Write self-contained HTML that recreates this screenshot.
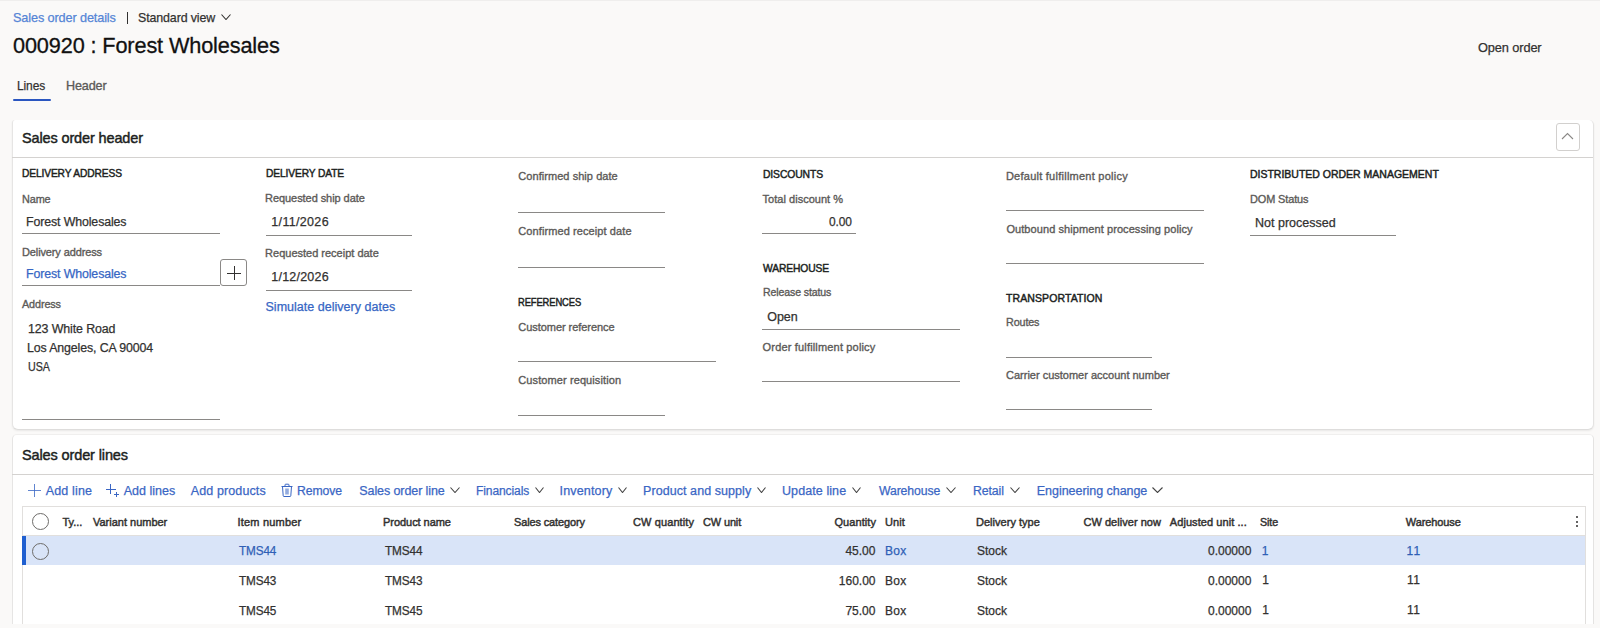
<!DOCTYPE html>
<html><head><meta charset="utf-8"><style>
html,body{margin:0;padding:0;}
body{width:1600px;height:628px;overflow:hidden;background:#faf9f8;position:relative;font-family:"Liberation Sans",sans-serif;}
.t{position:absolute;white-space:pre;}
.r{position:absolute;}
.card{position:absolute;background:#fff;border-left:1px solid #e6e5e4;border-right:1.5px solid #e4e3e2;box-sizing:border-box;}
</style></head><body>
<div class="r" style="left:0;top:0;width:1600px;height:1px;background:#efeeed"></div>
<div class="r" style="left:127px;top:12px;width:1px;height:12px;background:#323130"></div>
<div class="r" style="left:13px;top:99px;width:38px;height:2px;background:#2a56c0;border-radius:1px"></div>
<div class="card" style="left:12px;top:120px;width:1582px;height:310px;border-bottom:1.5px solid #dedddc;border-radius:3px 5px 6px 6px;box-shadow:0 1px 2px rgba(0,0,0,0.07)"></div>
<div class="r" style="left:12px;top:157px;width:1581px;height:1px;background:#d4d2d0"></div>
<div class="r" style="left:1556px;top:123px;width:22px;height:26px;border:1px solid #d2d0ce;border-radius:3px;background:#fff"></div>
<svg class="r" style="left:1561px;top:132px" width="13" height="8" viewBox="0 0 13 8"><polyline points="1,7 6.5,1.5 12,7" fill="none" stroke="#8a8886" stroke-width="1.1"/></svg>
<div class="r" style="left:220px;top:259px;width:25px;height:25px;border:1px solid #8a8886;border-radius:3px;background:#fff"></div>
<div class="r" style="left:227px;top:273px;width:14px;height:1px;background:#323130"></div>
<div class="r" style="left:233.5px;top:266px;width:1px;height:14px;background:#323130"></div>
<div class="card" style="left:12px;top:434px;width:1582px;height:200px;border-top:1px solid #f0efee;border-radius:5px 5px 0 0"></div>
<div class="r" style="left:12px;top:474px;width:1581px;height:1px;background:#d4d2d0"></div>
<div class="r" style="left:22px;top:506px;width:1562px;height:130px;border:1px solid #e1dfdd;background:#fff"></div>
<div class="r" style="left:23px;top:535px;width:1562px;height:1px;background:#e1dfdd"></div>
<div class="r" style="left:23px;top:536px;width:1562px;height:29px;background:#d9e4f8"></div>
<div class="r" style="left:22px;top:536px;width:4px;height:29px;background:#1f5fd0"></div>
<div class="r" style="left:32px;top:513px;width:15px;height:15px;border:1.3px solid #6e6c6a;border-radius:50%"></div>
<div class="r" style="left:32px;top:543px;width:15px;height:15px;border:1.3px solid #6e6c6a;border-radius:50%"></div>
<div class="r" style="left:1575.5px;top:515.5px;width:2px;height:2px;background:#323130;border-radius:50%"></div>
<div class="r" style="left:1575.5px;top:520.5px;width:2px;height:2px;background:#323130;border-radius:50%"></div>
<div class="r" style="left:1575.5px;top:525.2px;width:2px;height:2px;background:#323130;border-radius:50%"></div>
<div class="r" style="left:0;top:624px;width:1600px;height:4px;background:#faf9f8"></div>
<!-- toolbar icons -->
<div class="r" style="left:28px;top:490px;width:13px;height:1px;background:#3a66c4;opacity:.8"></div>
<div class="r" style="left:34px;top:484px;width:1px;height:13px;background:#3a66c4;opacity:.8"></div>
<div class="r" style="left:106px;top:489px;width:10px;height:1px;background:#3a66c4"></div>
<div class="r" style="left:110px;top:484px;width:1px;height:10px;background:#3a66c4"></div>
<div class="r" style="left:114px;top:494px;width:5px;height:1px;background:#3a66c4"></div>
<div class="r" style="left:116px;top:492px;width:1px;height:5px;background:#3a66c4"></div>
<svg class="r" style="left:281px;top:483px" width="12" height="15" viewBox="0 0 12 15"><path d="M0.5,3.5 H11.5 M4,3.5 V2 Q4,1.2 4.8,1.2 H7.2 Q8,1.2 8,2 V3.5 M1.5,3.5 L2.2,12.8 Q2.3,13.5 3,13.5 H9 Q9.7,13.5 9.8,12.8 L10.5,3.5" fill="none" stroke="#3a66c4" stroke-width="1"/><rect x="4.2" y="5.5" width="3.6" height="6" fill="#3a66c4" opacity="0.55"/></svg>
<div class="r" style="left:22px;top:233px;width:198px;height:1px;background:#8a8886"></div><div class="r" style="left:22px;top:285px;width:198px;height:1px;background:#8a8886"></div><div class="r" style="left:22px;top:419px;width:198px;height:1px;background:#8a8886"></div><div class="r" style="left:266px;top:235px;width:146px;height:1px;background:#8a8886"></div><div class="r" style="left:266px;top:290px;width:146px;height:1px;background:#8a8886"></div><div class="r" style="left:518px;top:212px;width:147px;height:1px;background:#8a8886"></div><div class="r" style="left:518px;top:267px;width:147px;height:1px;background:#8a8886"></div><div class="r" style="left:518px;top:361px;width:198px;height:1px;background:#8a8886"></div><div class="r" style="left:518px;top:415px;width:147px;height:1px;background:#8a8886"></div><div class="r" style="left:762px;top:233px;width:94px;height:1px;background:#8a8886"></div><div class="r" style="left:762px;top:329px;width:198px;height:1px;background:#8a8886"></div><div class="r" style="left:762px;top:381px;width:198px;height:1px;background:#8a8886"></div><div class="r" style="left:1006px;top:210px;width:198px;height:1px;background:#8a8886"></div><div class="r" style="left:1006px;top:263px;width:198px;height:1px;background:#8a8886"></div><div class="r" style="left:1006px;top:357px;width:146px;height:1px;background:#8a8886"></div><div class="r" style="left:1006px;top:409px;width:146px;height:1px;background:#8a8886"></div><div class="r" style="left:1250px;top:235px;width:146px;height:1px;background:#8a8886"></div>
<svg class="r" style="left:221px;top:14px" width="10" height="6" viewBox="0 0 10 6"><polyline points="0.5,0.5 5.0,5.5 9.5,0.5" fill="none" stroke="#323130" stroke-width="1.1"/></svg><svg class="r" style="left:450px;top:487px" width="10" height="6" viewBox="0 0 10 6"><polyline points="0.5,0.5 5.0,5.5 9.5,0.5" fill="none" stroke="#444" stroke-width="1.1"/></svg><svg class="r" style="left:535px;top:487px" width="9" height="6" viewBox="0 0 9 6"><polyline points="0.5,0.5 4.5,5.5 8.5,0.5" fill="none" stroke="#444" stroke-width="1.1"/></svg><svg class="r" style="left:618px;top:487px" width="9" height="6" viewBox="0 0 9 6"><polyline points="0.5,0.5 4.5,5.5 8.5,0.5" fill="none" stroke="#444" stroke-width="1.1"/></svg><svg class="r" style="left:757px;top:487px" width="9" height="6" viewBox="0 0 9 6"><polyline points="0.5,0.5 4.5,5.5 8.5,0.5" fill="none" stroke="#444" stroke-width="1.1"/></svg><svg class="r" style="left:852px;top:487px" width="9" height="6" viewBox="0 0 9 6"><polyline points="0.5,0.5 4.5,5.5 8.5,0.5" fill="none" stroke="#444" stroke-width="1.1"/></svg><svg class="r" style="left:946px;top:487px" width="10" height="6" viewBox="0 0 10 6"><polyline points="0.5,0.5 5.0,5.5 9.5,0.5" fill="none" stroke="#444" stroke-width="1.1"/></svg><svg class="r" style="left:1010px;top:487px" width="10" height="6" viewBox="0 0 10 6"><polyline points="0.5,0.5 5.0,5.5 9.5,0.5" fill="none" stroke="#444" stroke-width="1.1"/></svg><svg class="r" style="left:1152px;top:487px" width="11" height="6" viewBox="0 0 11 6"><polyline points="0.5,0.5 5.5,5.5 10.5,0.5" fill="none" stroke="#444" stroke-width="1.1"/></svg>
<span id="bread" class="t" style="left:12.50px;top:9.50px;font-size:13px;line-height:16px;letter-spacing:-0.120px;transform:scaleX(0.9754);transform-origin:0 0;-webkit-text-stroke:0.25px #5585d6;color:#5585d6;">Sales order details</span><span id="stdview" class="t" style="left:137.50px;top:9.50px;font-size:13px;line-height:16px;letter-spacing:-0.120px;transform:scaleX(0.9542);transform-origin:0 0;-webkit-text-stroke:0.25px #323130;color:#323130;">Standard view</span><span id="title" class="t" style="left:13.00px;top:32.18px;font-size:22px;line-height:28px;letter-spacing:-0.120px;transform:scaleX(0.9849);transform-origin:0 0;-webkit-text-stroke:0.3px #111;color:#111;">000920 : Forest Wholesales</span><span id="openorder" class="t" style="left:1477.50px;top:40.00px;font-size:13px;line-height:16px;letter-spacing:-0.120px;transform:scaleX(0.9838);transform-origin:0 0;-webkit-text-stroke:0.25px #323130;color:#323130;">Open order</span><span id="tab_lines" class="t" style="left:17.20px;top:78.30px;font-size:13px;line-height:16px;letter-spacing:-0.120px;transform:scaleX(0.9210);transform-origin:0 0;-webkit-text-stroke:0.25px #323130;color:#323130;">Lines</span><span id="tab_header" class="t" style="left:65.50px;top:78.30px;font-size:13px;line-height:16px;letter-spacing:-0.120px;transform:scaleX(0.9679);transform-origin:0 0;-webkit-text-stroke:0.35px #5c5a58;color:#5c5a58;">Header</span><span id="h_title" class="t" style="left:22.00px;top:128.88px;font-size:14.5px;line-height:18px;letter-spacing:-0.120px;transform:scaleX(0.9979);transform-origin:0 0;-webkit-text-stroke:0.45px #201f1e;color:#201f1e;">Sales order header</span><span id="s1" class="t" style="left:22.00px;top:167.36px;font-size:10.5px;line-height:13px;letter-spacing:-0.120px;transform:scaleX(0.9723);transform-origin:0 0;-webkit-text-stroke:0.45px #201f1e;color:#201f1e;">DELIVERY ADDRESS</span><span id="s2" class="t" style="left:265.60px;top:167.21px;font-size:10.5px;line-height:13px;letter-spacing:-0.120px;transform:scaleX(0.9741);transform-origin:0 0;-webkit-text-stroke:0.45px #201f1e;color:#201f1e;">DELIVERY DATE</span><span id="s3" class="t" style="left:762.60px;top:168.06px;font-size:10.5px;line-height:13px;letter-spacing:-0.120px;transform:scaleX(0.9864);transform-origin:0 0;-webkit-text-stroke:0.45px #201f1e;color:#201f1e;">DISCOUNTS</span><span id="s4" class="t" style="left:1249.90px;top:168.06px;font-size:10.5px;line-height:13px;letter-spacing:-0.002px;-webkit-text-stroke:0.45px #201f1e;color:#201f1e;">DISTRIBUTED ORDER MANAGEMENT</span><span id="s5" class="t" style="left:518.30px;top:296.36px;font-size:10.5px;line-height:13px;letter-spacing:-0.120px;transform:scaleX(0.8932);transform-origin:0 0;-webkit-text-stroke:0.45px #201f1e;color:#201f1e;">REFERENCES</span><span id="s6" class="t" style="left:762.60px;top:261.66px;font-size:10.5px;line-height:13px;letter-spacing:-0.120px;transform:scaleX(0.9788);transform-origin:0 0;-webkit-text-stroke:0.45px #201f1e;color:#201f1e;">WAREHOUSE</span><span id="s7" class="t" style="left:1006.00px;top:291.66px;font-size:10.5px;line-height:13px;letter-spacing:0.094px;-webkit-text-stroke:0.45px #201f1e;color:#201f1e;">TRANSPORTATION</span><span id="l1" class="t" style="left:21.50px;top:192.19px;font-size:11px;line-height:14px;letter-spacing:-0.120px;transform:scaleX(0.9872);transform-origin:0 0;-webkit-text-stroke:0.35px #5c5a58;color:#5c5a58;">Name</span><span id="l2" class="t" style="left:21.50px;top:245.19px;font-size:11px;line-height:14px;letter-spacing:-0.120px;transform:scaleX(0.9988);transform-origin:0 0;-webkit-text-stroke:0.35px #5c5a58;color:#5c5a58;">Delivery address</span><span id="l3" class="t" style="left:22.00px;top:297.49px;font-size:11px;line-height:14px;letter-spacing:-0.120px;transform:scaleX(0.9841);transform-origin:0 0;-webkit-text-stroke:0.35px #5c5a58;color:#5c5a58;">Address</span><span id="l4" class="t" style="left:265.10px;top:191.19px;font-size:11px;line-height:14px;letter-spacing:-0.067px;-webkit-text-stroke:0.35px #5c5a58;color:#5c5a58;">Requested ship date</span><span id="l5" class="t" style="left:265.10px;top:246.49px;font-size:11px;line-height:14px;letter-spacing:-0.002px;-webkit-text-stroke:0.35px #5c5a58;color:#5c5a58;">Requested receipt date</span><span id="l6" class="t" style="left:518.30px;top:169.39px;font-size:11px;line-height:14px;letter-spacing:0.055px;-webkit-text-stroke:0.35px #5c5a58;color:#5c5a58;">Confirmed ship date</span><span id="l7" class="t" style="left:518.30px;top:224.19px;font-size:11px;line-height:14px;letter-spacing:0.093px;-webkit-text-stroke:0.35px #5c5a58;color:#5c5a58;">Confirmed receipt date</span><span id="l8" class="t" style="left:518.30px;top:320.49px;font-size:11px;line-height:14px;letter-spacing:-0.048px;-webkit-text-stroke:0.35px #5c5a58;color:#5c5a58;">Customer reference</span><span id="l9" class="t" style="left:518.30px;top:373.49px;font-size:11px;line-height:14px;letter-spacing:0.098px;-webkit-text-stroke:0.35px #5c5a58;color:#5c5a58;">Customer requisition</span><span id="l10" class="t" style="left:762.60px;top:192.09px;font-size:11px;line-height:14px;letter-spacing:0.023px;-webkit-text-stroke:0.35px #5c5a58;color:#5c5a58;">Total discount %</span><span id="l11" class="t" style="left:762.60px;top:285.29px;font-size:11px;line-height:14px;letter-spacing:-0.120px;transform:scaleX(0.9605);transform-origin:0 0;-webkit-text-stroke:0.35px #5c5a58;color:#5c5a58;">Release status</span><span id="l12" class="t" style="left:762.60px;top:340.04px;font-size:11px;line-height:14px;letter-spacing:0.169px;-webkit-text-stroke:0.35px #5c5a58;color:#5c5a58;">Order fulfillment policy</span><span id="l13" class="t" style="left:1005.90px;top:169.39px;font-size:11px;line-height:14px;letter-spacing:0.251px;-webkit-text-stroke:0.35px #5c5a58;color:#5c5a58;">Default fulfillment policy</span><span id="l14" class="t" style="left:1006.40px;top:222.49px;font-size:11px;line-height:14px;letter-spacing:0.082px;-webkit-text-stroke:0.35px #5c5a58;color:#5c5a58;">Outbound shipment processing policy</span><span id="l15" class="t" style="left:1005.50px;top:315.34px;font-size:11px;line-height:14px;letter-spacing:-0.120px;transform:scaleX(0.9781);transform-origin:0 0;-webkit-text-stroke:0.35px #5c5a58;color:#5c5a58;">Routes</span><span id="l16" class="t" style="left:1006.00px;top:368.49px;font-size:11px;line-height:14px;letter-spacing:-0.002px;-webkit-text-stroke:0.35px #5c5a58;color:#5c5a58;">Carrier customer account number</span><span id="l17" class="t" style="left:1250.40px;top:192.19px;font-size:11px;line-height:14px;letter-spacing:-0.120px;transform:scaleX(0.9946);transform-origin:0 0;-webkit-text-stroke:0.35px #5c5a58;color:#5c5a58;">DOM Status</span><span id="v1" class="t" style="left:26.30px;top:214.37px;font-size:12.5px;line-height:16px;letter-spacing:-0.120px;transform:scaleX(0.9896);transform-origin:0 0;-webkit-text-stroke:0.25px #323130;color:#323130;">Forest Wholesales</span><span id="v2" class="t" style="left:26.30px;top:266.37px;font-size:12.5px;line-height:16px;letter-spacing:-0.120px;transform:scaleX(0.9896);transform-origin:0 0;-webkit-text-stroke:0.25px #3666c4;color:#3666c4;">Forest Wholesales</span><span id="v3" class="t" style="left:27.60px;top:321.27px;font-size:12.5px;line-height:16px;letter-spacing:-0.120px;transform:scaleX(0.9933);transform-origin:0 0;-webkit-text-stroke:0.25px #323130;color:#323130;">123 White Road</span><span id="v4" class="t" style="left:26.60px;top:340.27px;font-size:12.5px;line-height:16px;letter-spacing:-0.120px;transform:scaleX(0.9889);transform-origin:0 0;-webkit-text-stroke:0.25px #323130;color:#323130;">Los Angeles, CA 90004</span><span id="v5" class="t" style="left:27.60px;top:359.47px;font-size:12.5px;line-height:16px;letter-spacing:-0.120px;transform:scaleX(0.8562);transform-origin:0 0;-webkit-text-stroke:0.25px #323130;color:#323130;">USA</span><span id="v6" class="t" style="left:271.30px;top:214.17px;font-size:12.5px;line-height:16px;letter-spacing:0.327px;-webkit-text-stroke:0.25px #323130;color:#323130;">1/11/2026</span><span id="v7" class="t" style="left:271.30px;top:269.17px;font-size:12.5px;line-height:16px;letter-spacing:0.215px;-webkit-text-stroke:0.25px #323130;color:#323130;">1/12/2026</span><span id="v8" class="t" style="left:265.50px;top:298.67px;font-size:12.5px;line-height:16px;letter-spacing:0.018px;-webkit-text-stroke:0.25px #3666c4;color:#3666c4;">Simulate delivery dates</span><span id="v9" class="t" style="left:828.50px;top:214.37px;font-size:12.5px;line-height:16px;letter-spacing:-0.120px;transform:scaleX(0.9562);transform-origin:0 0;-webkit-text-stroke:0.25px #323130;color:#323130;">0.00</span><span id="v10" class="t" style="left:767.30px;top:309.07px;font-size:12.5px;line-height:16px;letter-spacing:-0.053px;-webkit-text-stroke:0.25px #323130;color:#323130;">Open</span><span id="v11" class="t" style="left:1254.90px;top:214.77px;font-size:12.5px;line-height:16px;letter-spacing:0.025px;-webkit-text-stroke:0.25px #323130;color:#323130;">Not processed</span><span id="l_title" class="t" style="left:22.00px;top:445.88px;font-size:14.5px;line-height:18px;letter-spacing:-0.120px;transform:scaleX(0.9998);transform-origin:0 0;-webkit-text-stroke:0.45px #201f1e;color:#201f1e;">Sales order lines</span><span id="t1" class="t" style="left:45.70px;top:483.07px;font-size:12.5px;line-height:16px;letter-spacing:0.159px;-webkit-text-stroke:0.25px #3a66c4;color:#3a66c4;">Add line</span><span id="t2" class="t" style="left:123.70px;top:483.07px;font-size:12.5px;line-height:16px;letter-spacing:0.005px;-webkit-text-stroke:0.25px #3a66c4;color:#3a66c4;">Add lines</span><span id="t3" class="t" style="left:190.70px;top:483.07px;font-size:12.5px;line-height:16px;letter-spacing:0.123px;-webkit-text-stroke:0.25px #3a66c4;color:#3a66c4;">Add products</span><span id="t4" class="t" style="left:297.30px;top:483.07px;font-size:12.5px;line-height:16px;letter-spacing:-0.120px;transform:scaleX(0.9785);transform-origin:0 0;-webkit-text-stroke:0.25px #3a66c4;color:#3a66c4;">Remove</span><span id="t5" class="t" style="left:359.30px;top:483.07px;font-size:12.5px;line-height:16px;letter-spacing:-0.089px;-webkit-text-stroke:0.25px #3a66c4;color:#3a66c4;">Sales order line</span><span id="t6" class="t" style="left:475.50px;top:483.07px;font-size:12.5px;line-height:16px;letter-spacing:-0.120px;transform:scaleX(0.9643);transform-origin:0 0;-webkit-text-stroke:0.25px #3a66c4;color:#3a66c4;">Financials</span><span id="t7" class="t" style="left:559.50px;top:483.07px;font-size:12.5px;line-height:16px;letter-spacing:0.163px;-webkit-text-stroke:0.25px #3a66c4;color:#3a66c4;">Inventory</span><span id="t8" class="t" style="left:643.00px;top:483.07px;font-size:12.5px;line-height:16px;letter-spacing:0.071px;-webkit-text-stroke:0.25px #3a66c4;color:#3a66c4;">Product and supply</span><span id="t9" class="t" style="left:782.00px;top:483.07px;font-size:12.5px;line-height:16px;letter-spacing:0.085px;-webkit-text-stroke:0.25px #3a66c4;color:#3a66c4;">Update line</span><span id="t10" class="t" style="left:879.40px;top:483.07px;font-size:12.5px;line-height:16px;letter-spacing:-0.120px;transform:scaleX(0.9790);transform-origin:0 0;-webkit-text-stroke:0.25px #3a66c4;color:#3a66c4;">Warehouse</span><span id="t11" class="t" style="left:973.40px;top:483.07px;font-size:12.5px;line-height:16px;letter-spacing:-0.120px;transform:scaleX(0.9876);transform-origin:0 0;-webkit-text-stroke:0.25px #3a66c4;color:#3a66c4;">Retail</span><span id="t12" class="t" style="left:1036.80px;top:483.07px;font-size:12.5px;line-height:16px;letter-spacing:-0.040px;-webkit-text-stroke:0.25px #3a66c4;color:#3a66c4;">Engineering change</span><span id="gh0" class="t" style="left:62.50px;top:515.19px;font-size:11px;line-height:14px;letter-spacing:-0.032px;-webkit-text-stroke:0.45px #323130;color:#323130;">Ty...</span><span id="gh1" class="t" style="left:93.00px;top:515.19px;font-size:11px;line-height:14px;letter-spacing:-0.008px;-webkit-text-stroke:0.45px #323130;color:#323130;">Variant number</span><span id="gh2" class="t" style="left:237.40px;top:515.19px;font-size:11px;line-height:14px;letter-spacing:0.213px;-webkit-text-stroke:0.45px #323130;color:#323130;">Item number</span><span id="gh3" class="t" style="left:383.00px;top:515.19px;font-size:11px;line-height:14px;letter-spacing:-0.045px;-webkit-text-stroke:0.45px #323130;color:#323130;">Product name</span><span id="gh4" class="t" style="left:513.50px;top:515.19px;font-size:11px;line-height:14px;letter-spacing:-0.120px;transform:scaleX(0.9959);transform-origin:0 0;-webkit-text-stroke:0.45px #323130;color:#323130;">Sales category</span><span id="gh5" class="t" style="left:633.00px;top:515.19px;font-size:11px;line-height:14px;letter-spacing:0.110px;-webkit-text-stroke:0.45px #323130;color:#323130;">CW quantity</span><span id="gh6" class="t" style="left:702.50px;top:515.19px;font-size:11px;line-height:14px;letter-spacing:-0.120px;transform:scaleX(0.9953);transform-origin:0 0;-webkit-text-stroke:0.45px #323130;color:#323130;">CW unit</span><span id="gh7" class="t" style="left:834.50px;top:515.19px;font-size:11px;line-height:14px;letter-spacing:0.064px;-webkit-text-stroke:0.45px #323130;color:#323130;">Quantity</span><span id="gh8" class="t" style="left:885.00px;top:515.19px;font-size:11px;line-height:14px;letter-spacing:0.083px;-webkit-text-stroke:0.45px #323130;color:#323130;">Unit</span><span id="gh9" class="t" style="left:976.00px;top:515.19px;font-size:11px;line-height:14px;letter-spacing:0.025px;-webkit-text-stroke:0.45px #323130;color:#323130;">Delivery type</span><span id="gh10" class="t" style="left:1083.50px;top:515.19px;font-size:11px;line-height:14px;letter-spacing:0.031px;-webkit-text-stroke:0.45px #323130;color:#323130;">CW deliver now</span><span id="gh11" class="t" style="left:1169.80px;top:515.19px;font-size:11px;line-height:14px;letter-spacing:0.072px;-webkit-text-stroke:0.45px #323130;color:#323130;">Adjusted unit ...</span><span id="gh12" class="t" style="left:1260.20px;top:515.19px;font-size:11px;line-height:14px;letter-spacing:-0.120px;transform:scaleX(0.9747);transform-origin:0 0;-webkit-text-stroke:0.45px #323130;color:#323130;">Site</span><span id="gh13" class="t" style="left:1405.80px;top:515.19px;font-size:11px;line-height:14px;letter-spacing:-0.106px;-webkit-text-stroke:0.45px #323130;color:#323130;">Warehouse</span><span id="r0item" class="t" style="left:239.10px;top:544.24px;font-size:12px;line-height:15px;letter-spacing:-0.120px;transform:scaleX(0.9780);transform-origin:0 0;-webkit-text-stroke:0.25px #2f5fb6;color:#2f5fb6;">TMS44</span><span id="r0prod" class="t" style="left:384.50px;top:544.24px;font-size:12px;line-height:15px;letter-spacing:-0.120px;transform:scaleX(0.9812);transform-origin:0 0;-webkit-text-stroke:0.25px #323130;color:#323130;">TMS44</span><span id="r0qty" class="t" style="left:845.45px;top:544.24px;font-size:12px;line-height:15px;-webkit-text-stroke:0.25px #323130;color:#323130;">45.00</span><span id="r0unit" class="t" style="left:885.00px;top:544.24px;font-size:12px;line-height:15px;letter-spacing:0.250px;-webkit-text-stroke:0.25px #2f5fb6;color:#2f5fb6;">Box</span><span id="r0dt" class="t" style="left:977.00px;top:544.24px;font-size:12px;line-height:15px;letter-spacing:-0.013px;-webkit-text-stroke:0.25px #323130;color:#323130;">Stock</span><span id="r0adj" class="t" style="left:1208.00px;top:544.24px;font-size:12px;line-height:15px;-webkit-text-stroke:0.25px #323130;color:#323130;">0.00000</span><span id="r0site" class="t" style="left:1261.80px;top:544.24px;font-size:12px;line-height:15px;-webkit-text-stroke:0.25px #2f5fb6;color:#2f5fb6;">1</span><span id="r0wh" class="t" style="left:1406.50px;top:544.24px;font-size:12px;line-height:15px;letter-spacing:1.250px;-webkit-text-stroke:0.25px #2f5fb6;color:#2f5fb6;">11</span><span id="r1item" class="t" style="left:239.10px;top:574.04px;font-size:12px;line-height:15px;letter-spacing:-0.120px;transform:scaleX(0.9780);transform-origin:0 0;-webkit-text-stroke:0.25px #323130;color:#323130;">TMS43</span><span id="r1prod" class="t" style="left:384.50px;top:574.04px;font-size:12px;line-height:15px;letter-spacing:-0.120px;transform:scaleX(0.9812);transform-origin:0 0;-webkit-text-stroke:0.25px #323130;color:#323130;">TMS43</span><span id="r1qty" class="t" style="left:838.80px;top:574.04px;font-size:12px;line-height:15px;-webkit-text-stroke:0.25px #323130;color:#323130;">160.00</span><span id="r1unit" class="t" style="left:885.00px;top:574.04px;font-size:12px;line-height:15px;letter-spacing:0.250px;-webkit-text-stroke:0.25px #323130;color:#323130;">Box</span><span id="r1dt" class="t" style="left:977.00px;top:574.04px;font-size:12px;line-height:15px;letter-spacing:-0.013px;-webkit-text-stroke:0.25px #323130;color:#323130;">Stock</span><span id="r1adj" class="t" style="left:1208.00px;top:574.04px;font-size:12px;line-height:15px;-webkit-text-stroke:0.25px #323130;color:#323130;">0.00000</span><span id="r1site" class="t" style="left:1262.30px;top:573.24px;font-size:12px;line-height:15px;-webkit-text-stroke:0.25px #323130;color:#323130;">1</span><span id="r1wh" class="t" style="left:1407.00px;top:573.24px;font-size:12px;line-height:15px;letter-spacing:0.550px;-webkit-text-stroke:0.25px #323130;color:#323130;">11</span><span id="r2item" class="t" style="left:239.10px;top:604.04px;font-size:12px;line-height:15px;letter-spacing:-0.120px;transform:scaleX(0.9780);transform-origin:0 0;-webkit-text-stroke:0.25px #323130;color:#323130;">TMS45</span><span id="r2prod" class="t" style="left:384.50px;top:604.04px;font-size:12px;line-height:15px;letter-spacing:-0.120px;transform:scaleX(0.9812);transform-origin:0 0;-webkit-text-stroke:0.25px #323130;color:#323130;">TMS45</span><span id="r2qty" class="t" style="left:845.45px;top:604.04px;font-size:12px;line-height:15px;-webkit-text-stroke:0.25px #323130;color:#323130;">75.00</span><span id="r2unit" class="t" style="left:885.00px;top:604.04px;font-size:12px;line-height:15px;letter-spacing:0.250px;-webkit-text-stroke:0.25px #323130;color:#323130;">Box</span><span id="r2dt" class="t" style="left:977.00px;top:604.04px;font-size:12px;line-height:15px;letter-spacing:-0.013px;-webkit-text-stroke:0.25px #323130;color:#323130;">Stock</span><span id="r2adj" class="t" style="left:1208.00px;top:604.04px;font-size:12px;line-height:15px;-webkit-text-stroke:0.25px #323130;color:#323130;">0.00000</span><span id="r2site" class="t" style="left:1262.30px;top:603.24px;font-size:12px;line-height:15px;-webkit-text-stroke:0.25px #323130;color:#323130;">1</span><span id="r2wh" class="t" style="left:1407.00px;top:603.24px;font-size:12px;line-height:15px;letter-spacing:0.550px;-webkit-text-stroke:0.25px #323130;color:#323130;">11</span>
</body></html>
